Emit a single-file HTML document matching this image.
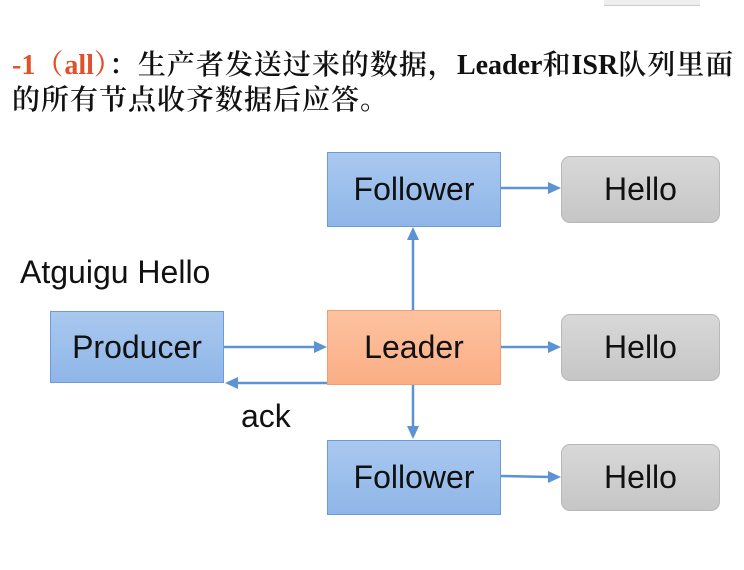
<!DOCTYPE html>
<html><head><meta charset="utf-8"><style>
body{margin:0;width:744px;height:570px;background:#fff;position:relative;overflow:hidden;font-family:"Liberation Sans",sans-serif}
.t{position:absolute;left:12px;font-family:"Liberation Serif","Noto Serif CJK SC",serif;font-size:28px;color:#111;white-space:nowrap;font-weight:600;letter-spacing:1px}
.t b{font-weight:bold;letter-spacing:0}
.b{position:absolute;box-sizing:border-box;display:flex;align-items:center;justify-content:center;font-size:32px;color:#111}
.blue{background:linear-gradient(#a9c8ef,#8fb6e8);border:1px solid #6d9bd8}
.or{background:linear-gradient(#fdc2a0,#fbae85);border:1px solid #f0a070}
.gr{background:linear-gradient(#d8d8d8,#c6c6c6);border:1px solid #b8b8b8;border-radius:9px}
</style></head><body>
<div style="position:absolute;left:604px;top:0;width:96px;height:5px;background:#eee;border-bottom:1px solid #ccc"></div>
<div class="t" style="top:43px"><b style="color:#e0502a">-1</b><span style="color:#e0502a">（<b>all</b>）</span>：生产者发送过来的数据，<b>Leader</b>和<b>ISR</b>队列里面</div>
<div class="t" style="top:78px">的所有节点收齐数据后应答。</div>
<div style="position:absolute;left:20px;top:254px;font-size:32px;color:#111">Atguigu Hello</div>
<div style="position:absolute;left:241px;top:398px;font-size:32px;color:#111">ack</div>
<div class="b blue" style="left:327px;top:152px;width:174px;height:75px">Follower</div>
<div class="b or" style="left:327px;top:310px;width:174px;height:75px">Leader</div>
<div class="b blue" style="left:327px;top:440px;width:174px;height:75px">Follower</div>
<div class="b blue" style="left:50px;top:311px;width:174px;height:72px">Producer</div>
<div class="b gr" style="left:561px;top:156px;width:159px;height:67px">Hello</div>
<div class="b gr" style="left:561px;top:314px;width:159px;height:67px">Hello</div>
<div class="b gr" style="left:561px;top:444px;width:159px;height:67px">Hello</div>
<svg width="744" height="570" style="position:absolute;left:0;top:0">
<g stroke="#5b93d3" stroke-width="2.5" fill="none">
<line x1="224" y1="347" x2="316" y2="347"/>
<line x1="327" y1="383" x2="236" y2="383"/>
<line x1="413" y1="310" x2="413" y2="238"/>
<line x1="413" y1="385" x2="413" y2="428"/>
<line x1="501" y1="188" x2="550" y2="188"/>
<line x1="501" y1="347" x2="550" y2="347"/>
<line x1="501" y1="476" x2="550" y2="477"/>
</g>
<g fill="#5b93d3">
<polygon points="327,347 314,341 314,353"/>
<polygon points="225,383 238,377 238,389"/>
<polygon points="413,227 407,240 419,240"/>
<polygon points="413,439 407,426 419,426"/>
<polygon points="561,188 548,182 548,194"/>
<polygon points="561,347 548,341 548,353"/>
<polygon points="561,477 548,471 548,483"/>
</g></svg>
</body></html>
